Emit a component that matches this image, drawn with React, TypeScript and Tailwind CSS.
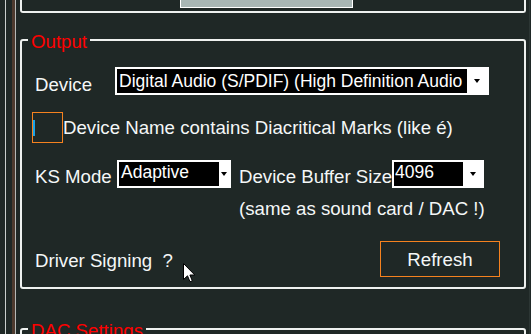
import React from "react";

function Dropdown({ width, blackWidth, text, lead, pad }: { width: number; blackWidth: number; text: string; lead: string; pad: string }) {
  return (
    <div className="h-[28px] bg-white p-[2px] flex shrink-0" style={{ width }}>
      <div className={`bg-black text-white text-[17.5px] overflow-hidden whitespace-nowrap ${lead} ${pad}`} style={{ width: blackWidth }}>
        {text}
      </div>
      <div className="flex-1 flex items-center justify-center">
        <div className="w-0 h-0 border-l-[3px] border-r-[3px] border-t-[4px] border-l-transparent border-r-transparent border-t-black" />
      </div>
    </div>
  );
}

export default function App() {
  return (
    <div className="relative w-[531px] h-[334px] overflow-hidden bg-[#1f2826] flex font-['Liberation_Sans',Arial,sans-serif] text-[18.67px] text-[#f4f7f7]">
      {/* window rails on the left */}
      <div className="w-[20px] shrink-0 flex">
        <div className="w-[5px]" />
        <div className="w-[1px] bg-[#c9cecc]" />
        <div className="w-[6px]" />
        <div className="w-[3px] bg-[#4d3a2e]" />
        <div className="w-[1px] bg-[#b5b9b7]" />
        <div className="w-[4px]" />
      </div>

      <div className="w-[506px] shrink-0 flex flex-col">
        {/* bottom of the previous panel */}
        <div className="h-[13px] shrink-0 border-x-2 border-b-2 border-[#eef1ef] rounded-b-[3px]">
          <div className="ml-[158px] w-[173px] h-[8px] bg-[#a8b6b4] border-x border-b border-white" />
        </div>

        <fieldset className="mt-[17px] shrink-0 border-2 border-[#eef1ef] rounded-[3px] px-0 pb-[8px] m-0">
          <legend className="ml-[6px] px-[3px] pt-[4px] leading-[16px] text-[#ff0000]">Output</legend>

          <div className="flex mt-[17px]">
            <div className="ml-[13px] w-[80px] mt-[6px] leading-[24px]">Device</div>
            <Dropdown width={374} blackWidth={350} text="Digital Audio (S/PDIF) (High Definition Audio" lead="leading-[24px]" pad="pl-[2px]" />
          </div>

          <div className="flex mt-[15px]">
            <div className="ml-[10px] w-[31px] h-[31px] border border-[#f5821f] flex items-center shrink-0">
              <div className="w-[2px] h-[16px] bg-[#1aa3e8]" />
            </div>
            <div className="leading-[31px] whitespace-nowrap">Device Name contains Diacritical Marks (like é)</div>
          </div>

          <div className="flex mt-[17px]">
            <div className="ml-[13px] w-[82px] mt-[5px] leading-[24px] whitespace-nowrap">KS Mode</div>
            <Dropdown width={114} blackWidth={100} text="Adaptive" lead="leading-[20px]" pad="pl-[2px]" />
            <div className="ml-[8px] w-[153px] mt-[5px] leading-[24px] whitespace-nowrap">Device Buffer Size</div>
            <Dropdown width={92} blackWidth={69} text="4096" lead="leading-[20px]" pad="pl-[1px]" />
          </div>

          <div className="ml-[217px] mt-[8px] leading-[24px] whitespace-nowrap">(same as sound card / DAC !)</div>

          <div className="flex mt-[20px]">
            <div className="ml-[13px] pt-[2px] leading-[36px] whitespace-pre">Driver Signing  ?</div>
            <div className="ml-auto mr-[24px] w-[120px] h-[36px] border border-[#f5821f] flex items-center justify-center pt-[2px]">
              Refresh
            </div>
          </div>
        </fieldset>

        <fieldset className="mt-[30px] h-[100px] shrink-0 border-2 border-[#eef1ef] rounded-[3px] px-0 m-0">
          <legend className="ml-[6px] px-[3px] pt-[4px] leading-[16px] text-[#ff0000]">DAC Settings</legend>
        </fieldset>
      </div>

      <div className="w-[5px] shrink-0 flex">
        <div className="w-[3px]" />
        <div className="w-[1px] bg-[#2c3634]" />
      </div>

      {/* mouse pointer */}
      <svg className="absolute left-[183px] top-[263px]" width="13" height="20" viewBox="0 0 13 20">
        <path d="M0.5 0.5 V16.5 L4.5 12.8 L7 18.8 L9.3 17.8 L6.9 12 H11.8 Z" fill="white" stroke="black" strokeWidth="1" />
      </svg>
    </div>
  );
}
